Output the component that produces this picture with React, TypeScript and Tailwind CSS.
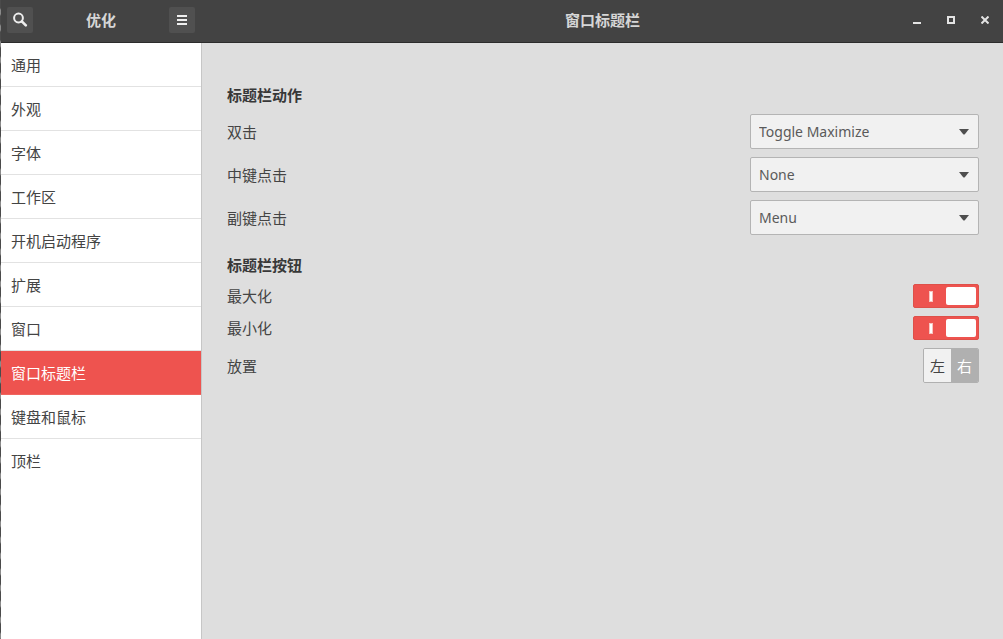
import { useState } from 'react';
import type { ReactNode } from 'react';

const pages = [
  '通用',
  '外观',
  '字体',
  '工作区',
  '开机启动程序',
  '扩展',
  '窗口',
  '窗口标题栏',
  '键盘和鼠标',
  '顶栏',
];

const clickActions = [
  { id: 'double-click', label: '双击', value: 'Toggle Maximize' },
  { id: 'middle-click', label: '中键点击', value: 'None' },
  { id: 'secondary-click', label: '副键点击', value: 'Menu' },
];

const actionOptions = ['None', 'Toggle Maximize', 'Minimize', 'Lower', 'Menu'];

interface HeaderButtonProps {
  label: string;
  filled?: boolean;
  children: ReactNode;
}

function HeaderButton({ label, filled, children }: HeaderButtonProps) {
  return (
    <button
      type="button"
      aria-label={label}
      className={
        filled
          ? 'flex size-[26px] items-center justify-center rounded-xs bg-[#505050] text-[#eeeeee] hover:bg-[#5a5a5a]'
          : 'flex size-[26px] items-center justify-center text-[#e4e4e4] hover:text-white'
      }
    >
      {children}
    </button>
  );
}

function ActionSelect({ id, label, value }: { id: string; label: string; value: string }) {
  const [selected, setSelected] = useState(value);

  return (
    <div className="flex items-center justify-between">
      <label htmlFor={id}>{label}</label>
      <div className="relative">
        <select
          id={id}
          value={selected}
          onChange={(e) => setSelected(e.target.value)}
          className="block h-[35px] w-[229px] appearance-none rounded-xs border border-[#b4b4b4] bg-[#f1f1f1] pl-2 pr-8 text-sm text-[#5a5a5a]"
        >
          {actionOptions.map((option) => (
            <option key={option}>{option}</option>
          ))}
        </select>
        <svg
          viewBox="0 0 10 6"
          className="pointer-events-none absolute right-[10px] top-[15px] h-[6px] w-[10px] fill-[#4e4e4e]"
        >
          <path d="M0 0h10L6 5Q5 6 4 5z" />
        </svg>
      </div>
    </div>
  );
}

function SwitchRow({ id, label }: { id: string; label: string }) {
  const [on, setOn] = useState(true);

  return (
    <div className="flex h-6 items-center justify-between">
      <label htmlFor={id}>{label}</label>
      <div className="relative">
        <input
          id={id}
          type="checkbox"
          role="switch"
          checked={on}
          onChange={(e) => setOn(e.target.checked)}
          className="peer block h-6 w-[66px] appearance-none rounded-xs border border-[#de5049] bg-[#ee534f] not-checked:border-[#a8a8a8] not-checked:bg-[#bdbdbd]"
        />
        <span className="pointer-events-none absolute inset-y-[3px] left-[3px] w-[30px] rounded-xs bg-white peer-checked:left-[33px]" />
        <span className="pointer-events-none absolute left-4 top-[7px] hidden h-[11px] w-[4px] border border-[#f8c4c0] bg-white peer-checked:block" />
      </div>
    </div>
  );
}

function Placement() {
  const [side, setSide] = useState('右');

  return (
    <div className="flex items-center justify-between">
      <span id="placement">放置</span>
      <div
        role="radiogroup"
        aria-labelledby="placement"
        className="flex h-[35px] w-14 overflow-hidden rounded-xs border border-[#b0b0b0]"
      >
        {['左', '右'].map((option) => (
          <label
            key={option}
            className="flex flex-1 items-center justify-center bg-[#f1f1f1] has-checked:bg-[#b0b0b0] has-checked:text-white"
          >
            <input
              type="radio"
              name="placement"
              value={option}
              checked={side === option}
              onChange={() => setSide(option)}
              className="sr-only"
            />
            {option}
          </label>
        ))}
      </div>
    </div>
  );
}

export default function App() {
  const [page, setPage] = useState('窗口标题栏');

  return (
    <div className="relative flex min-h-screen flex-col bg-[#dedede] font-['Noto_Sans','Noto_Sans_CJK_SC',sans-serif] text-[15px] leading-5 text-[#444444]">
      <header className="flex h-[43px] border-b border-[#2c2c2c] bg-[#434343] font-bold text-[#d6d6d6]">
        <div className="flex w-[202px] shrink-0 items-center justify-between px-[7px] pb-[2px]">
          <HeaderButton label="搜索" filled>
            <svg viewBox="0 0 16 16" className="size-4 fill-none stroke-current">
              <circle cx="6.5" cy="6" r="4.4" strokeWidth="2" />
              <path d="M9.8 9.3l4 4" strokeWidth="2.6" strokeLinecap="round" />
            </svg>
          </HeaderButton>
          <h1>优化</h1>
          <HeaderButton label="菜单" filled>
            <svg viewBox="0 0 10 10" className="size-[10px] fill-current">
              <path d="M0 0h10v2H0zM0 4h10v2H0zM0 8h10v2H0z" />
            </svg>
          </HeaderButton>
        </div>
        <div className="grid flex-1 grid-cols-[1fr_auto_1fr] items-center pb-[2px]">
          <h2 className="col-start-2">{page}</h2>
          <div className="flex justify-end gap-2 pr-[5px]">
            <HeaderButton label="最小化窗口">
              <svg viewBox="0 0 8 8" className="size-2 fill-current">
                <path d="M0 6h8v2H0z" />
              </svg>
            </HeaderButton>
            <HeaderButton label="最大化窗口">
              <svg viewBox="0 0 8 8" className="size-2 fill-none stroke-current">
                <path d="M1 1h6v6H1z" strokeWidth="2" />
              </svg>
            </HeaderButton>
            <HeaderButton label="关闭窗口">
              <svg viewBox="0 0 8 8" className="size-2 fill-none stroke-current">
                <path d="M.5.5l7 7M7.5.5l-7 7" strokeWidth="2" />
              </svg>
            </HeaderButton>
          </div>
        </div>
      </header>

      <div className="flex flex-1">
        <nav className="w-[202px] shrink-0 border-r border-[#c6c6c6] bg-white">
          {pages.map((name) => (
            <button
              key={name}
              type="button"
              onClick={() => setPage(name)}
              aria-current={page === name ? 'page' : undefined}
              className="flex h-11 w-full items-center border-b border-[#e2e2e2] pl-[11px] text-left last:border-b-0 aria-[current=page]:border-[#f0655f] aria-[current=page]:bg-[#ee534f] aria-[current=page]:text-white"
            >
              {name}
            </button>
          ))}
        </nav>

        <main className="flex-1 pl-[25px] pr-6 pt-[42px]">
          <section>
            <h3 className="font-bold text-[#383838]">标题栏动作</h3>
            <div className="mt-[9px] flex flex-col gap-2">
              {clickActions.map((action) => (
                <ActionSelect key={action.id} {...action} />
              ))}
            </div>
          </section>
          <section className="mt-5">
            <h3 className="font-bold text-[#383838]">标题栏按钮</h3>
            <div className="mt-[9px] flex flex-col gap-2">
              <SwitchRow id="maximize" label="最大化" />
              <SwitchRow id="minimize" label="最小化" />
              <Placement />
            </div>
          </section>
        </main>
      </div>

      {/* desktop showing along the window's edge */}
      <div className="pointer-events-none absolute inset-y-0 left-0 w-px bg-[repeating-linear-gradient(#4a4a4a_0_8px,#8a8a8a_10px_14px,#4a4a4a_16px)]" />
    </div>
  );
}
